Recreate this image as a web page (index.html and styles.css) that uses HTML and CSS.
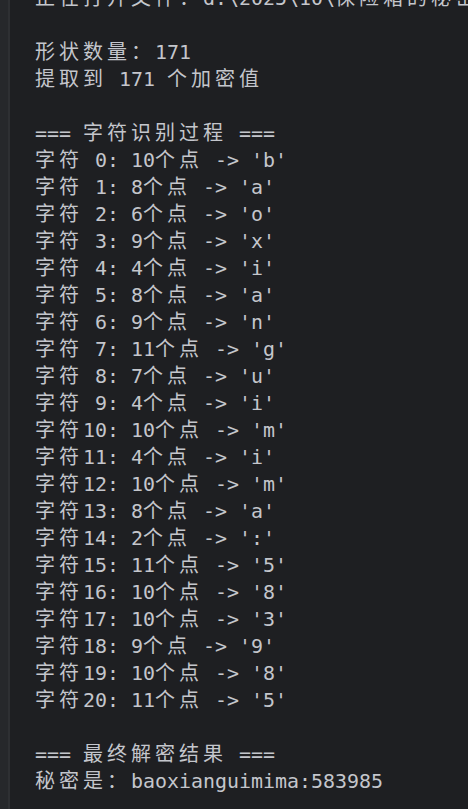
FILE: index.html
```html
<!DOCTYPE html>
<html lang="zh-CN">
<head>
<meta charset="utf-8">
<title>Console</title>
<link rel="stylesheet" href="styles.css">
</head>
<body>
<div class="panel">
  <div class="gutter"></div>
  <div class="console">
    <div class="line"><span class="c">正在打开文件：</span>d:\2025\10\<span class="c">保险箱的秘密</span></div>
    <div class="line"></div>
    <div class="line"><span class="c">形状数量：</span>171</div>
    <div class="line"><span class="c">提取到</span> 171 <span class="c">个加密值</span></div>
    <div class="line"></div>
    <div class="line">=== <span class="c">字符识别过程</span> ===</div>
    <div class="line"><span class="c">字符</span> 0: 10<span class="c">个点</span> -&gt; 'b'</div>
    <div class="line"><span class="c">字符</span> 1: 8<span class="c">个点</span> -&gt; 'a'</div>
    <div class="line"><span class="c">字符</span> 2: 6<span class="c">个点</span> -&gt; 'o'</div>
    <div class="line"><span class="c">字符</span> 3: 9<span class="c">个点</span> -&gt; 'x'</div>
    <div class="line"><span class="c">字符</span> 4: 4<span class="c">个点</span> -&gt; 'i'</div>
    <div class="line"><span class="c">字符</span> 5: 8<span class="c">个点</span> -&gt; 'a'</div>
    <div class="line"><span class="c">字符</span> 6: 9<span class="c">个点</span> -&gt; 'n'</div>
    <div class="line"><span class="c">字符</span> 7: 11<span class="c">个点</span> -&gt; 'g'</div>
    <div class="line"><span class="c">字符</span> 8: 7<span class="c">个点</span> -&gt; 'u'</div>
    <div class="line"><span class="c">字符</span> 9: 4<span class="c">个点</span> -&gt; 'i'</div>
    <div class="line"><span class="c">字符</span>10: 10<span class="c">个点</span> -&gt; 'm'</div>
    <div class="line"><span class="c">字符</span>11: 4<span class="c">个点</span> -&gt; 'i'</div>
    <div class="line"><span class="c">字符</span>12: 10<span class="c">个点</span> -&gt; 'm'</div>
    <div class="line"><span class="c">字符</span>13: 8<span class="c">个点</span> -&gt; 'a'</div>
    <div class="line"><span class="c">字符</span>14: 2<span class="c">个点</span> -&gt; ':'</div>
    <div class="line"><span class="c">字符</span>15: 11<span class="c">个点</span> -&gt; '5'</div>
    <div class="line"><span class="c">字符</span>16: 10<span class="c">个点</span> -&gt; '8'</div>
    <div class="line"><span class="c">字符</span>17: 10<span class="c">个点</span> -&gt; '3'</div>
    <div class="line"><span class="c">字符</span>18: 9<span class="c">个点</span> -&gt; '9'</div>
    <div class="line"><span class="c">字符</span>19: 10<span class="c">个点</span> -&gt; '8'</div>
    <div class="line"><span class="c">字符</span>20: 11<span class="c">个点</span> -&gt; '5'</div>
    <div class="line"></div>
    <div class="line">=== <span class="c">最终解密结果</span> ===</div>
    <div class="line"><span class="c">秘密是：</span>baoxianguimima:583985</div>
  </div>
</div>
</body>
</html>
```
FILE: styles.css
```css
html, body {
  margin: 0;
  padding: 0;
  height: 100%;
  background: #1e1f22;
  overflow: hidden;
}

.panel {
  display: flex;
  height: 100%;
}

.gutter {
  width: 8px;
  flex: none;
  background: #26282b;
  border-right: 2px solid #2e3033;
}

.console {
  flex: 1;
  padding-left: 25px;
  margin-top: -17px;
  font-family: "DejaVu Sans Mono", "Noto Sans CJK SC", monospace;
  font-size: 19.93px;
  color: #c4c6cc;
}

.line {
  height: 27px;
  line-height: 27px;
  white-space: pre;
}

.c {
  font-family: "Noto Sans CJK SC", sans-serif;
  font-size: 20px;
  letter-spacing: 4px;
}
```
